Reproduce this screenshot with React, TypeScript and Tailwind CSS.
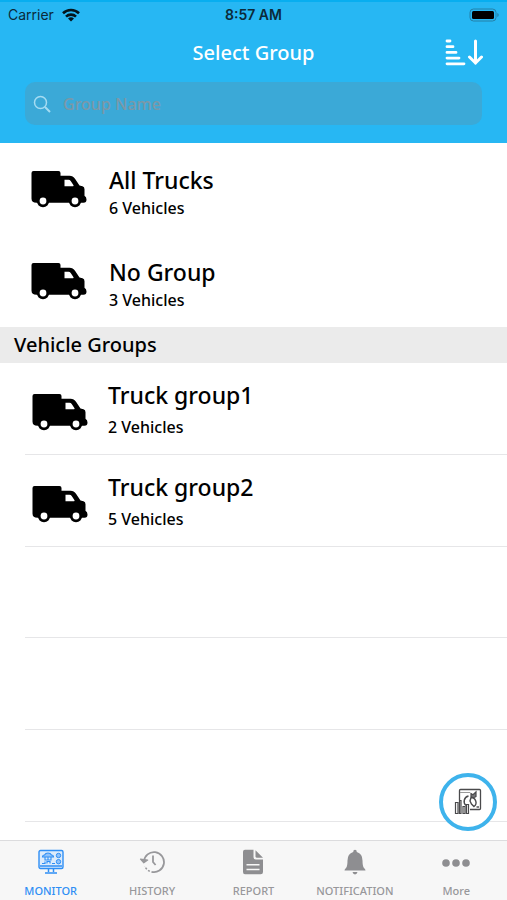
import React, { useState } from 'react';

interface Group {
  name: string;
  vehicles: number;
}

const summaryGroups: Group[] = [
  { name: 'All Trucks', vehicles: 6 },
  { name: 'No Group', vehicles: 3 },
];

const vehicleGroups: Group[] = [
  { name: 'Truck group1', vehicles: 2 },
  { name: 'Truck group2', vehicles: 5 },
];

function TruckIcon() {
  return (
    <svg viewBox="0 0 56 38" className="h-[38px] w-14 shrink-0" aria-hidden="true">
      <path d="M2.500 1h25q2 0 2 2v2.800h9q3.500 0 5.500 3l4.500 6.700 3 .8q2 .7 2 3v6.400q2 1 2 3.800 0 3.300-3 3.300H6Q.5 33 .5 28.500V3q0-2 2-2z" />
      <path d="M33.500 9.800h4q1.400 0 2.200 1.300l2.800 4.200q.4.900-.5.900h-8.500z" fill="#fff" />
      <circle cx="12" cy="31" r="6.200" />
      <circle cx="12" cy="31" r="3.400" fill="#fff" />
      <circle cx="44" cy="31" r="6.200" />
      <circle cx="44" cy="31" r="3.400" fill="#fff" />
    </svg>
  );
}

function StatusBar() {
  return (
    <div className="grid h-7 grid-cols-3 items-center border-t-2 border-[#08aef0] px-2 font-['Inter',sans-serif] text-[13px] text-[#0b2a3a]">
      <div className="flex items-center gap-2">
        <span className="text-sm">Carrier</span>
        <svg viewBox="0 0 18 14" className="h-3.5 w-[18px]" aria-hidden="true">
          <g fill="none" stroke="#04141c" strokeWidth="2.600">
            <path d="M1 5.200a11.500 11.500 0 0 1 16 0" />
            <path d="M4 8.600a7.200 7.200 0 0 1 10 0" />
          </g>
          <path d="M6 10.600a4.400 4.400 0 0 1 6 0L9 13.600z" fill="#04141c" />
        </svg>
      </div>
      <span className="text-center text-sm font-semibold">8:57 AM</span>
      <svg viewBox="0 0 30 14" className="h-3.5 w-[30px] justify-self-end" aria-hidden="true">
        <rect x="1" y="1" width="26" height="12" rx="3.500" fill="none" stroke="#2580a8" />
        <rect x="3" y="3" width="22" height="8" rx="1.500" fill="#000" />
        <path d="M28.300 5v4q1.400-.6 1.400-2t-1.400-2z" fill="#2580a8" />
      </svg>
    </div>
  );
}

function SortIcon() {
  return (
    <svg viewBox="0 0 38 28" className="h-7 w-[38px]" fill="none" stroke="#fff" strokeLinecap="round" aria-hidden="true">
      <path d="M2 2h3M2 7.700h6M2 13.400h9M2 19.100h12M2 24.800h17" strokeWidth="2.800" />
      <path d="M30.500 2v22M24.500 18l6 6 6-6" strokeWidth="3" />
    </svg>
  );
}

function MonitorIcon() {
  return (
    <svg viewBox="0 0 26 26" className="h-[26px] w-[26px]" fill="none" stroke="#2f8ff5" aria-hidden="true">
      <rect x="1" y="1.500" width="24" height="18" rx="1.500" fill="#dcebfb" strokeWidth="1.400" />
      <path d="M2 17h22M10.500 20v3M15.500 20v3M7 24h12" strokeWidth="1.500" />
      <path d="M4.500 8q0-2 2-2 1-2 3.500-2t3.500 2q2 0 2 2z" fill="#8fc2fa" strokeWidth="1.100" />
      <path d="M7 8v3h6V8M10 8v3" strokeWidth="1.100" />
      <path d="M4 14.500h3v-2M9 14.500v-2h3v2M14 14.500h3" strokeWidth="1.200" />
      <circle cx="20.500" cy="6.500" r="2.200" fill="#8fc2fa" />
      <circle cx="20.500" cy="12.700" r="2.200" fill="#8fc2fa" />
    </svg>
  );
}

function HistoryIcon() {
  return (
    <svg viewBox="0 0 26 26" className="h-[26px] w-[26px]" fill="none" stroke="#98989b" aria-hidden="true">
      <path d="M5 12.500a10 10 0 1 1 7.500 10.300" strokeWidth="1.800" />
      <path d="M10.800 22.300a10 10 0 0 1-5-5" strokeWidth="1.500" strokeDasharray="2 1.500" />
      <path d="M1.500 10.200l3.300 3.600 3.900-2.800z" fill="#98989b" strokeWidth="1.200" strokeLinejoin="round" />
      <path d="M14 6.500v6.500l2.600 3" strokeWidth="1.800" />
    </svg>
  );
}

function ReportIcon() {
  return (
    <svg viewBox="0 0 26 26" className="h-[26px] w-[26px]" fill="#8e8e91" aria-hidden="true">
      <path d="M5 .7h8.500v7.500q0 2.300 2.300 2.300H23V23q0 2.300-2.300 2.300H5Q3 25.300 3 23V2.700Q3 .7 5 .7z" />
      <path d="M15.500 1.200l7.500 7.500h-6q-1.500 0-1.500-1.500z" />
      <path d="M6.500 15.700h13M6.500 20.500h13" stroke="#f7f7f7" strokeWidth="1.500" />
    </svg>
  );
}

function BellIcon() {
  return (
    <svg viewBox="0 0 26 26" className="h-[26px] w-[26px]" fill="#8e8e91" aria-hidden="true">
      <path d="M13 .8q1.800 0 1.800 2.200 5.700 1.600 5.700 8.500 0 6 1.500 7.500 1.500 1.200 1.500 2.500h-21q0-1.300 1.500-2.500 1.500-1.500 1.500-7.500 0-6.900 5.700-8.500 0-2.200 1.800-2.200z" />
      <path d="M10.500 23h5q-.5 2.400-2.500 2.400T10.500 23z" />
    </svg>
  );
}

function MoreIcon() {
  return (
    <svg viewBox="0 0 28 26" className="h-[26px] w-7" fill="#8e8e91" aria-hidden="true">
      <circle cx="4" cy="14" r="3.800" />
      <circle cx="14" cy="14" r="3.800" />
      <circle cx="24" cy="14" r="3.800" />
    </svg>
  );
}

function DashboardIcon() {
  return (
    <svg viewBox="0 0 28 28" className="h-7 w-7" fill="none" stroke="#4a4a4c" aria-hidden="true">
      <path d="M5.500 12V2.500q0-1 1-1h19q1 0 1 1v18q0 1-1 1H16" strokeWidth="1.300" />
      <path d="M6 4.500h10" stroke="#9a9a9a" strokeWidth="1" />
      <path d="M14.500 8a5.500 5.500 0 0 0-2.500 9.500" strokeWidth="1.400" />
      <path d="M17 9.500a5 5 0 0 1 3 9l-2.500-2.500-1.500-3z" strokeWidth="1.400" />
      <path d="M17 8.500V5.500l2 1.300L22 4v4.500q-2.500 2-5 0z" fill="#77777a" strokeWidth="1.200" />
      <path d="M22.500 19h2.500" strokeWidth="1.400" />
      <path d="M1.500 25.500v-11h2.500v11zM5.500 25.500v-13h1.500v13zM9 25.500v-7h2v7zM12.500 25.500v-9h2v9z" fill="#fff" strokeWidth="1.200" />
    </svg>
  );
}

const tabs = [
  { label: 'MONITOR', icon: MonitorIcon },
  { label: 'HISTORY', icon: HistoryIcon },
  { label: 'REPORT', icon: ReportIcon },
  { label: 'NOTIFICATION', icon: BellIcon },
  { label: 'More', icon: MoreIcon },
];

export default function App() {
  const [search, setSearch] = useState('');
  const [activeTab, setActiveTab] = useState('MONITOR');

  const matches = (group: Group) => group.name.toLowerCase().includes(search.toLowerCase());

  return (
    <div className="flex min-h-screen flex-col bg-white font-['Noto_Sans',sans-serif] text-black">
      <header className="bg-[#27b7f3] pb-[18px]">
        <StatusBar />
        <div className="grid h-[54px] grid-cols-[1fr_auto_1fr] items-center px-6 pb-1">
          <h1 className="col-start-2 text-xl font-medium text-white">Select Group</h1>
          <button type="button" aria-label="Sort groups" className="justify-self-end">
            <SortIcon />
          </button>
        </div>
        <div className="mx-[25px] flex h-[43px] items-center gap-3 rounded-[10px] bg-[#3ba9d7] px-2">
          <svg viewBox="0 0 18 18" className="h-[18px] w-[18px] shrink-0" fill="none" stroke="#a5dcf2" strokeWidth="1.500" aria-hidden="true">
            <circle cx="7.500" cy="7.500" r="6" />
            <path d="M12 12l5 5" strokeWidth="2" />
          </svg>
          <input
            type="text"
            aria-label="Group Name"
            placeholder="Group Name"
            value={search}
            onChange={(e) => setSearch(e.target.value)}
            className="min-w-0 flex-1 bg-transparent text-base font-medium text-white outline-none placeholder:text-[#7b98a8]"
          />
        </div>
      </header>

      <main className="flex-1">
        <ul>
          {summaryGroups.filter(matches).map((group) => (
            <li key={group.name}>
              <button type="button" className="flex h-[92px] w-full items-center gap-[22px] pl-[31px] text-left">
                <TruckIcon />
                <span className="flex flex-col pt-1.5">
                  <span className="text-[23px] leading-8 font-medium">{group.name}</span>
                  <span className="text-base leading-6 font-medium">{group.vehicles} Vehicles</span>
                </span>
              </button>
            </li>
          ))}
        </ul>

        <h2 className="flex h-9 items-center bg-[#ebebeb] px-3.5 text-xl font-medium">Vehicle Groups</h2>

        <ul>
          {vehicleGroups.filter(matches).map((group) => (
            <li key={group.name} className="ml-[25px] border-b border-[#e6e6e8]">
              <button type="button" className="flex h-[91px] w-full items-center gap-5 pl-[7px] text-left">
                <span className="pt-1.5">
                  <TruckIcon />
                </span>
                <span className="flex flex-col gap-1">
                  <span className="text-[23px] leading-8 font-medium">{group.name}</span>
                  <span className="text-base leading-6 font-medium">{group.vehicles} Vehicles</span>
                </span>
              </button>
            </li>
          ))}
        </ul>
        <div className="ml-[25px]" aria-hidden="true">
          <div className="h-[91px] border-b border-[#e6e6e8]" />
          <div className="h-[92px] border-b border-[#e6e6e8]" />
          <div className="h-[92px] border-b border-[#e6e6e8]" />
        </div>
      </main>

      <button
        type="button"
        aria-label="Open dashboard"
        className="fixed right-2.5 bottom-[69px] flex h-[58px] w-[58px] items-center justify-center rounded-full border-4 border-[#3eb3ec] bg-white"
      >
        <DashboardIcon />
      </button>

      <nav className="sticky bottom-0 grid h-[60px] grid-cols-5 border-t border-[#dcdcde] bg-[#f7f7f7]">
        {tabs.map(({ label, icon: Icon }) => (
          <button
            key={label}
            type="button"
            onClick={() => setActiveTab(label)}
            className={`flex flex-col items-center gap-2 pt-2 text-[11px] leading-4 font-medium ${
              activeTab === label ? 'text-[#2f8ff5]' : 'text-[#98989b]'
            }`}
          >
            <Icon />
            {label}
          </button>
        ))}
      </nav>
    </div>
  );
}
